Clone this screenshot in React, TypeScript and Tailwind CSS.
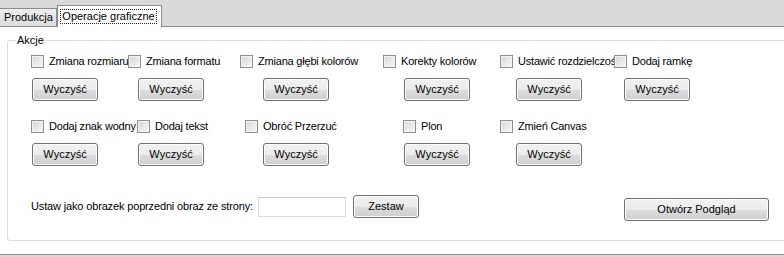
import React from "react";

const font = { fontFamily: '"Liberation Sans", Arial, sans-serif' };

const btnCls =
  "h-[23px] rounded-[3px] border border-[#707070] bg-[linear-gradient(to_bottom,#f2f2f2_0%,#ebebeb_50%,#dddddd_51%,#cfcfcf_100%)] shadow-[inset_0_0_0_1px_#fcfcfc] text-[11px] leading-[13px] text-black flex items-center justify-center shrink-0";

const Box = () => (
  <span className="w-[13px] h-[13px] shrink-0 border border-[#8e8f8f] bg-[linear-gradient(135deg,#d4d4d4_0%,#e8e8e8_50%,#f8f8f8_100%)] shadow-[inset_0_0_0_1px_#f4f4f4]" />
);

const Check = ({ label, w }: { label: string; w: number | string }) => (
  <div
    className="flex items-center h-[13px] overflow-hidden shrink-0"
    style={{ width: w }}
  >
    <Box />
    <span className="ml-[5px] whitespace-nowrap text-[11px] leading-[13px] tracking-[-0.2px] text-black">
      {label}
    </span>
  </div>
);

const Btn = ({ label, w }: { label: string; w: number }) => (
  <div className="shrink-0" style={{ width: w }}>
    <button className={`${btnCls} w-[66px]`}>{label}</button>
  </div>
);

const row1 = [
  { label: "Zmiana rozmiaru", w: 97 },
  { label: "Zmiana formatu", w: 112 },
  { label: "Zmiana głębi kolorów", w: 143 },
  { label: "Korekty kolorów", w: 117 },
  { label: "Ustawić rozdzielczość", w: 114 },
  { label: "Dodaj ramkę", w: 120 },
];

const row2 = [
  { label: "Dodaj znak wodny", w: 106 },
  { label: "Dodaj tekst", w: 108 },
  { label: "Obróć Przerzuć", w: 158 },
  { label: "Plon", w: 97 },
  { label: "Zmień Canvas", w: 120 },
];

const btns1 = [106, 125, 141, 112, 108, 80];
const btns2 = [106, 125, 141, 112, 108];

export default function App() {
  return (
    <div
      className="w-[784px] h-[257px] overflow-hidden bg-[#dadada]"
      style={font}
    >
      {/* tabs */}
      <div className="h-[26px] flex items-end">
        <div className="w-[57px] h-[18px] border-t border-r border-[#898c95] bg-[linear-gradient(to_bottom,#eeeeee,#dcdcdc)] flex items-center pl-[4px] text-[11px] leading-[13px] text-black">
          Produkcja
        </div>
        <div className="relative z-10 -mb-px w-[105px] h-[22px] border-t border-l border-r border-[#898c95] bg-white flex items-start pl-[2px] pt-[3px]">
          <div className="w-[97px] h-[15px] border border-dotted border-[#222] flex items-center justify-center text-[11px] leading-[13px] text-black">
            Operacje graficzne
          </div>
        </div>
      </div>

      {/* tab page */}
      <div className="h-[229px] bg-white border-t border-b border-[#898c95] pt-[13px] pl-[7px]">
        <div className="relative w-[800px] h-[201px] rounded-[3px] border border-[#d5dfe5] flex flex-col pl-[23px]">
          <span className="absolute left-[8px] -top-[7px] bg-white px-[1px] text-[11px] leading-[13px] text-black">
            Akcje
          </span>

          <div className="mt-[14px] flex">
            {row1.map((c) => (
              <Check key={c.label} label={c.label} w={c.w} />
            ))}
          </div>
          <div className="mt-[10px] flex pl-[1px]">
            {btns1.map((w, i) => (
              <Btn key={i} label="Wyczyść" w={w} />
            ))}
          </div>

          <div className="mt-[19px] flex">
            {row2.map((c) => (
              <Check key={c.label} label={c.label} w={c.w} />
            ))}
          </div>
          <div className="mt-[10px] flex pl-[1px]">
            {btns2.map((w, i) => (
              <Btn key={i} label="Wyczyść" w={w} />
            ))}
          </div>

          <div className="mt-[29px] flex items-start h-[26px]">
            <span className="mt-[5px] w-[227px] whitespace-nowrap text-[11px] leading-[13px] text-black tracking-[-0.15px]">
              Ustaw jako obrazek poprzedni obraz ze strony:
            </span>
            <input
              className="mt-[2px] w-[88px] h-[20px] border border-[#d9dbe0] border-t-[#c5c7cc] bg-white outline-none"
              readOnly
            />
            <button className={`${btnCls} ml-[7px] w-[66px]`}>Zestaw</button>
            <button className={`${btnCls} mt-[3px] ml-[205px] w-[145px]`}>
              Otwórz Podgląd
            </button>
          </div>
        </div>
      </div>
    </div>
  );
}
